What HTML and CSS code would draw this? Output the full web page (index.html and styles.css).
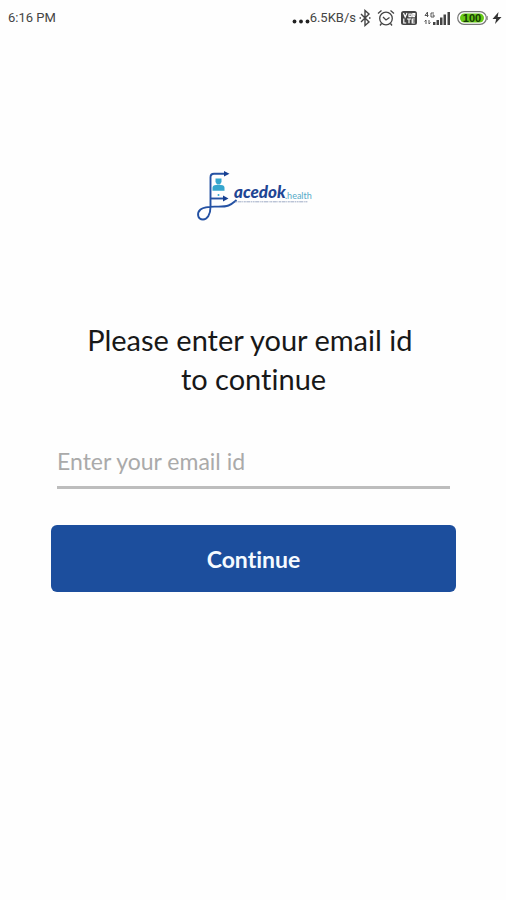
FILE: index.html
```html
<!DOCTYPE html>
<html lang="en">
<head>
<meta charset="utf-8">
<meta name="viewport" content="width=device-width, initial-scale=1">
<title>Facedok health</title>
<link rel="stylesheet" href="styles.css">
</head>
<body>
<header class="status">
  <span class="status-text">6:16 PM</span>
  <div class="status-group">
    <svg class="dots" width="18" height="16" viewBox="0 0 18 16" fill="#222"><circle cx="2.500" cy="11.500" r="1.900"/><circle cx="9" cy="11.500" r="1.900"/><circle cx="15.500" cy="11.500" r="1.900"/></svg>
    <span class="status-text">6.5KB/s</span>
    <svg class="bluetooth" width="12" height="18" viewBox="0 0 12 18" fill="none" stroke="#444" stroke-width="1.400"><path d="M2 5l8 8-4 3.500v-15L10 5l-8 8"/><path d="M.5 9h1.500M10 9h1.500"/></svg>
    <svg class="alarm" width="18" height="18" viewBox="0 0 18 18" fill="none" stroke="#444" stroke-width="1.300"><circle cx="9" cy="9.500" r="6.300"/><path d="M1 4.500L4.500 1.500M17 4.500L13.500 1.500M6 8l3 3 3.500-2.500M4.500 14.500L3 16.500M13.500 14.500l1.500 2"/></svg>
    <svg class="volte" width="16" height="16" viewBox="0 0 16 16"><rect y="1" width="16" height="14" rx="2.500" fill="#444"/><g fill="none" stroke="#fff" stroke-width="1.200"><path d="M2.500 3l1.700 4L6 3M8 4h2.200v2.700H8zM11.500 5.200h2.300V3.700h-2v3h2.200M2.800 8.500V13h2.400M6 9h4M8 9v4.200M13.800 9h-2.600v4h2.600M11.200 11h2.400"/></g></svg>
    <svg class="signal" width="28" height="16" viewBox="0 0 28 16" fill="#444"><path d="M10 12h2.500v3H10zM13.500 10H16v5h-2.500zM17 7.500h2.500V15H17zM20.500 4.500H23V15h-2.500zM24.500 2H27v13h-2.500z"/><path d="M4.500 7V2L2 5.500h3.500M11 3H8v4h3V5H9.500M3 14v-4l-1.500 1.500M6 10v4l1.500-1.500" fill="none" stroke="#555"/></svg>
    <svg class="battery" width="31" height="16" viewBox="0 0 31 16"><rect x=".7" y="1.700" width="28.600" height="12.600" rx="6.300" fill="#fff" stroke="#777" stroke-width="1.200"/><rect x="3" y="3.500" width="24" height="9" rx="4.500" fill="#68ca16"/><path d="M30.200 6v4" stroke="#777"/><text class="battery-text" x="15" y="12" text-anchor="middle">100</text></svg>
    <svg class="bolt" width="10" height="16" viewBox="0 0 10 16" fill="#333"><path d="M6.500 2L.5 9h3.700L3 14l6.500-7H5.700z"/></svg>
  </div>
</header>
<main class="content">
  <svg class="logo" width="116" height="54" viewBox="10 9 116 54" role="img" aria-label="Facedok health">
    <g fill="none" stroke="#2451a3" stroke-width="1.900">
      <path d="M40 13.700H28q-3.500 0-3.500 3.500V47c0 8-3.500 12.500-7.500 12.500-5.500 0-6.500-6.500-2.500-10 7-5.500 20-1 28-4 4-1.500 5-3 8-5.500"/>
      <path d="M24.500 38.500h15"/>
    </g>
    <g fill="#173f91"><path d="M38 11l5.500 2.700-5.500 2.700zM37 35.500l5.500 3-5.500 3z"/></g>
    <g fill="#35a6ce"><path d="M29.500 18.500h6v3.500l-1.500 2.500h-3L29.500 22z"/><path d="M26.500 30.800v-3q0-2.500 3.500-2.800h5q3.500.3 3.500 2.800v3z"/><circle cx="32.500" cy="35" r="1"/></g>
    <text class="logo-name" x="48" y="38">acedok</text>
    <text class="logo-health" x="99" y="39">.health</text>
    <path d="M49 41.800h73" stroke="#8494b5" stroke-width=".8" stroke-dasharray="2 .6 4 .6 1 .6"/>
  </svg>
  <form class="form">
    <h1 class="title"><label for="email">Please enter your email id&nbsp;<br>to continue</label></h1>
    <input class="email" id="email" type="email" placeholder="Enter your email id">
    <button class="continue" type="button">Continue</button>
  </form>
</main>
</body>
</html>
```
FILE: styles.css
```css
* {
  box-sizing: border-box;
}

body {
  margin: 0;
  min-height: 100vh;
  background: #fefefe;
  color: #181818;
  font-family: Lato, "Open Sans", sans-serif;
  font-variant-ligatures: none;
}

.status {
  display: flex;
  align-items: center;
  justify-content: space-between;
  height: 36px;
  padding: 0 4px 0 8px;
}

.status-text {
  color: #444;
  font-family: Roboto, sans-serif;
  font-size: 13px;
  line-height: 16px;
}

.status-group {
  display: flex;
  align-items: center;
}

.bluetooth {
  margin: 0 6px 0 3px;
}

.volte {
  margin: 0 6px;
}

.battery {
  margin: 0 4px 0 6px;
}

.battery-text {
  fill: #163b08;
  font: bold 11px "Liberation Sans", sans-serif;
}

.content {
  display: flex;
  flex-direction: column;
  align-items: center;
  padding: 133px 50px 48px 51px;
}

.logo {
  display: block;
}

.logo-name {
  fill: #1e4594;
  font: italic 900 17px Lato, sans-serif;
}

.logo-health {
  fill: #55aac8;
  font: 9px Lato, sans-serif;
}

.form {
  display: flex;
  flex-direction: column;
  width: 100%;
  margin-top: 97px;
}

.title {
  margin: 0;
  font-size: 29px;
  font-weight: 400;
  line-height: 39px;
  text-align: center;
}

.email {
  height: 52px;
  margin: 39px 6px 36px;
  padding: 0 0 2px;
  border: 0;
  border-bottom: 3px solid #bdbdbd;
  border-radius: 0;
  outline: 0;
  background: transparent;
  color: #181818;
  font-family: Lato, sans-serif;
  font-size: 23px;
}

.email::placeholder {
  color: #aaa;
  opacity: 1;
}

.continue {
  height: 67px;
  border: 0;
  border-radius: 6px;
  background: #1c4e9d;
  color: #f5faff;
  font-family: Lato, sans-serif;
  font-size: 23px;
  font-weight: 700;
  font-variant-ligatures: none;
}
```
